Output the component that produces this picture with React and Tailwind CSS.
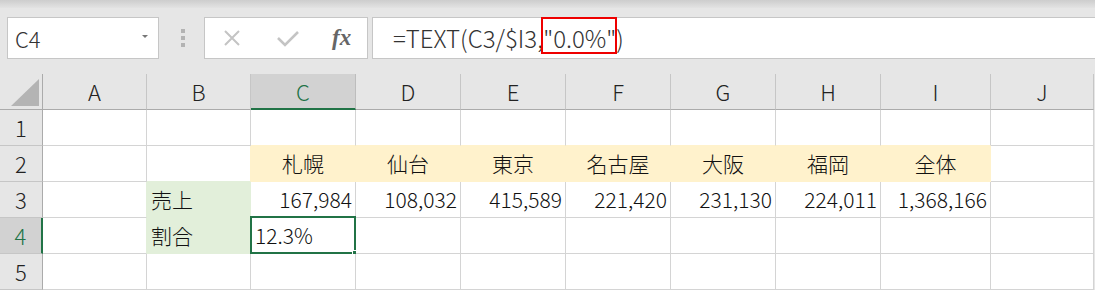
import React from 'react';

const COLS = ['A', 'B', 'C', 'D', 'E', 'F', 'G', 'H', 'I', 'J'];

// fill key -> class names (written out in full)
const FILL = {
  y: { bg: 'bg-[#fff2cc]', r: 'border-r-[#fff2cc]', b: 'border-b-[#fff2cc]' },
  g: { bg: 'bg-[#e2efda]', r: 'border-r-[#e2efda]', b: 'border-b-[#e2efda]' },
};

const ROWS = [
  {},
  {
    C: { t: '札幌', a: 'c', f: 'y' },
    D: { t: '仙台', a: 'c', f: 'y' },
    E: { t: '東京', a: 'c', f: 'y' },
    F: { t: '名古屋', a: 'c', f: 'y' },
    G: { t: '大阪', a: 'c', f: 'y' },
    H: { t: '福岡', a: 'c', f: 'y' },
    I: { t: '全体', a: 'c', f: 'y' },
  },
  {
    B: { t: '売上', a: 'l', f: 'g' },
    C: { t: '167,984', a: 'r' },
    D: { t: '108,032', a: 'r' },
    E: { t: '415,589', a: 'r' },
    F: { t: '221,420', a: 'r' },
    G: { t: '231,130', a: 'r' },
    H: { t: '224,011', a: 'r' },
    I: { t: '1,368,166', a: 'r' },
  },
  {
    B: { t: '割合', a: 'l', f: 'g' },
    C: { t: '12.3%', a: 'l', active: true },
  },
  {},
];

const ALIGN = {
  l: 'justify-start pl-[4px]',
  c: 'justify-center',
  r: 'justify-end pr-[3px]',
};

function Cell({ row, ci }) {
  const col = COLS[ci];
  const cell = ROWS[row][col] || {};
  const right = ROWS[row][COLS[ci + 1]];
  const below = ROWS[row + 1] ? ROWS[row + 1][col] : null;
  const own = cell.f ? FILL[cell.f] : null;
  const rFill = own || (right && right.f ? FILL[right.f] : null);
  const bFill = own || (below && below.f ? FILL[below.f] : null);

  return (
    <div
      className={[
        'relative flex items-center h-[36px] border-r border-b border-[#d4d4d4] text-[21px] font-light text-[#111] whitespace-nowrap',
        own ? own.bg : 'bg-white',
        rFill ? rFill.r : '',
        bFill ? bFill.b : '',
        ALIGN[cell.a || 'l'],
      ].join(' ')}
    >
      {cell.t}
      {cell.active && (
        <>
          <div className="absolute -left-[1px] -top-[2px] -right-[1px] -bottom-[1px] border-2 border-[#217346]" />
          <div className="absolute -right-[4px] -bottom-[4px] w-[7px] h-[7px] bg-[#217346] border border-white" />
        </>
      )}
    </div>
  );
}

function Toolbar() {
  return (
    <div className="h-[74px] bg-[#e6e6e6]">
      <div className="h-[8px] bg-linear-to-b from-[#cdcdcd] to-[#e3e3e3]" />
      <div className="flex items-start mt-[9px]">
        {/* name box */}
        <div className="ml-[7px] w-[152px] h-[42px] bg-white border border-[#c6c6c6] flex items-center justify-between pl-[7px] pr-[10px]">
          <span className="text-[22px] font-light text-[#333]">C4</span>
          <span className="w-0 h-0 border-l-[3px] border-r-[3px] border-t-[3px] border-l-transparent border-r-transparent border-t-[#777] mt-[-4px]" />
        </div>
        {/* grip dots */}
        <div className="w-[45px] h-[42px] flex flex-col items-center justify-center gap-[3px] pl-[2px]">
          <span className="w-[4px] h-[4px] bg-[#b3b3b3]" />
          <span className="w-[4px] h-[4px] bg-[#b3b3b3]" />
          <span className="w-[4px] h-[4px] bg-[#b3b3b3]" />
        </div>
        {/* cancel / enter / fx */}
        <div className="w-[164px] h-[42px] bg-white border border-[#c6c6c6] flex items-center">
          <svg width="18" height="16" viewBox="0 0 18 16" className="ml-[18px]">
            <path d="M2 1 L16 15 M16 1 L2 15" stroke="#c4c4c4" strokeWidth="2" fill="none" />
          </svg>
          <svg width="22" height="16" viewBox="0 0 22 16" className="ml-[36px] mt-[2px]">
            <path d="M1 7 L8 14 L21 1" stroke="#c4c4c4" strokeWidth="2.6" fill="none" />
          </svg>
          <span className="ml-[33px] font-['Liberation_Serif',serif] italic font-bold text-[23px] text-[#666] leading-none mb-[2px]">
            fx
          </span>
        </div>
        {/* formula input */}
        <div className="ml-[4px] flex-1 -mr-[2px] h-[42px] bg-white border border-[#c6c6c6] flex items-center pl-[20px] text-[24px] font-light text-[#333] whitespace-nowrap">
          =TEXT(C3/$I3,
          <span className="relative">
            "0.0%"
            <span className="absolute -left-[2px] -right-[1px] -top-[3px] bottom-[2px] border-2 border-[#ee0000]" />
          </span>
          )
        </div>
      </div>
    </div>
  );
}

export default function App() {
  return (
    <div className="w-[1095px] h-[290px] overflow-hidden bg-[#e6e6e6] font-['Noto_Sans_CJK_JP',sans-serif]">
      <Toolbar />
      <div className="grid grid-cols-[43px_104px_104px_105px_105px_105px_105px_105px_105px_110px_103px]">
        {/* corner */}
        <div className="h-[36px] bg-[#e6e6e6] border-r border-b border-[#ababab] flex items-end justify-end pr-[3px] pb-[3px]">
          <svg width="28" height="27" viewBox="0 0 28 27">
            <path d="M28 0 L28 27 L0 27 Z" fill="#b4b4b4" />
          </svg>
        </div>
        {COLS.map((c) =>
          c === 'C' ? (
            <div
              key={c}
              className="h-[36px] bg-[#d2d2d2] border-r border-[#bdbdbd] border-b-2 border-b-[#217346] flex items-center justify-center text-[22px] font-light text-[#217346]"
            >
              {c}
            </div>
          ) : (
            <div
              key={c}
              className="h-[36px] bg-[#e6e6e6] border-r border-[#c6c6c6] border-b border-b-[#ababab] flex items-center justify-center text-[22px] font-light text-[#222]"
            >
              {c}
            </div>
          )
        )}
        {ROWS.map((_, r) => (
          <React.Fragment key={r}>
            {r === 3 ? (
              <div className="h-[36px] bg-[#d2d2d2] border-r-2 border-r-[#217346] border-b border-b-[#c6c6c6] flex items-center justify-center text-[22px] font-light text-[#217346]">
                {r + 1}
              </div>
            ) : (
              <div className="h-[36px] bg-[#e6e6e6] border-r border-r-[#ababab] border-b border-b-[#c6c6c6] flex items-center justify-center text-[22px] font-light text-[#222]">
                {r + 1}
              </div>
            )}
            {COLS.map((c, ci) => (
              <Cell key={c} row={r} ci={ci} />
            ))}
          </React.Fragment>
        ))}
      </div>
    </div>
  );
}
